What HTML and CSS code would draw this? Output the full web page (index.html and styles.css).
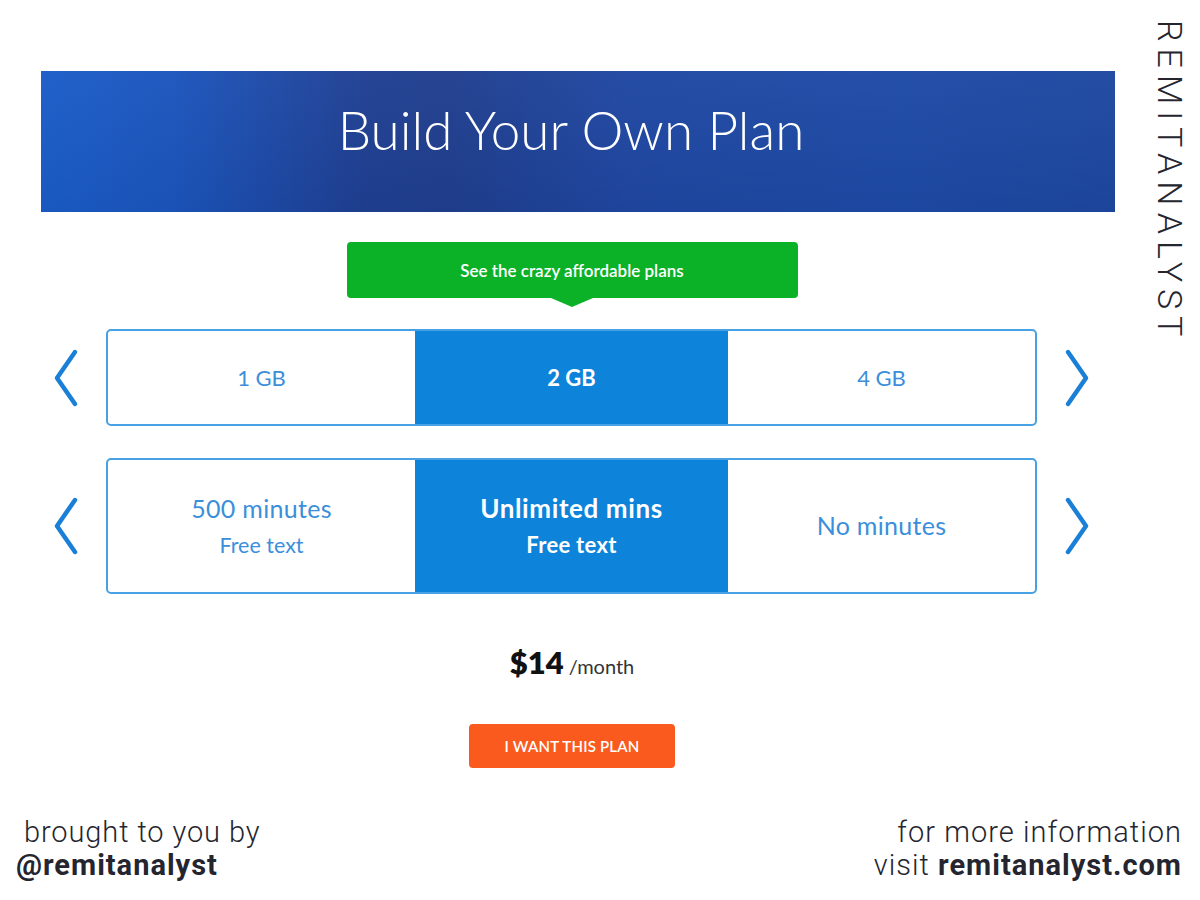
FILE: index.html
```html
<!DOCTYPE html>
<html lang="en">
<head>
<meta charset="utf-8">
<title>Build Your Own Plan</title>
<link rel="stylesheet" href="styles.css">
</head>
<body>
<div class="page">
  <div class="main">
    <header class="banner"><h1 class="banner-title">Build Your Own Plan</h1></header>
    <div class="stage">
      <div class="tip">See the crazy affordable plans</div>

      <div class="selector">
        <div class="nav nav-left">
          <svg width="26" height="60" viewBox="0 0 26 60"><path d="M22 4 L4 30 L22 56" fill="none" stroke="#1a80d7" stroke-width="4.5" stroke-linecap="round" stroke-linejoin="round"/></svg>
        </div>
        <div class="box box-data">
          <div class="cell">1 GB</div>
          <div class="cell cell-active">2 GB</div>
          <div class="cell">4 GB</div>
        </div>
        <div class="nav nav-right">
          <svg width="26" height="60" viewBox="0 0 26 60"><path d="M4 4 L22 30 L4 56" fill="none" stroke="#1a80d7" stroke-width="4.5" stroke-linecap="round" stroke-linejoin="round"/></svg>
        </div>
      </div>

      <div class="selector selector-mins">
        <div class="nav nav-left">
          <svg width="26" height="60" viewBox="0 0 26 60"><path d="M22 4 L4 30 L22 56" fill="none" stroke="#1a80d7" stroke-width="4.5" stroke-linecap="round" stroke-linejoin="round"/></svg>
        </div>
        <div class="box box-mins">
          <div class="cell cell-stack"><span class="big">500 minutes</span><span class="small">Free text</span></div>
          <div class="cell cell-active cell-stack"><span class="big">Unlimited mins</span><span class="small">Free text</span></div>
          <div class="cell"><span class="big">No minutes</span></div>
        </div>
        <div class="nav nav-right">
          <svg width="26" height="60" viewBox="0 0 26 60"><path d="M4 4 L22 30 L4 56" fill="none" stroke="#1a80d7" stroke-width="4.5" stroke-linecap="round" stroke-linejoin="round"/></svg>
        </div>
      </div>

      <div class="price"><span class="amount">$14</span><span class="per">/month</span></div>
      <a class="cta">I WANT THIS PLAN</a>
    </div>
  </div>

  <footer class="footer">
    <div class="credit">
      <div class="light indent">brought to you by</div>
      <div class="bold handle">@remitanalyst</div>
    </div>
    <div class="info">
      <div class="light">for more information</div>
      <div class="light">visit <span class="bold">remitanalyst.com</span></div>
    </div>
  </footer>

  <div class="brand">REMITANALYST</div>
</div>
</body>
</html>
```

FILE: styles.css
```css
* { box-sizing: border-box; }
html, body { margin: 0; padding: 0; background: #ffffff; }

.page {
  position: relative;
  width: 1200px;
  height: 900px;
  display: flex;
  flex-direction: column;
  font-family: Lato, "Liberation Sans", sans-serif;
  overflow: hidden;
}

.main {
  padding-top: 71px;
  padding-left: 41px;
}

.banner {
  width: 1074px;
  height: 141px;
  display: flex;
  align-items: center;
  justify-content: center;
  padding-right: 14px;
  background:
    linear-gradient(180deg, rgba(255,255,255,0.03) 0%, rgba(0,0,0,0.04) 100%),
    linear-gradient(90deg, #1a5cc8 0%, #1b55bd 12%, #1f3f92 30%, #1f3e8e 38%, #1f47a2 55%, #1d4aa6 80%, #1d47a0 100%);
}

.banner-title {
  margin: 0;
  color: #ffffff;
  font-family: Lato, "Open Sans", sans-serif;
  font-weight: 300;
  font-size: 53px;
  letter-spacing: 0px;
  line-height: 1;
  padding-bottom: 24px;
}

.stage {
  width: 1062px;
  display: flex;
  flex-direction: column;
  align-items: center;
}

.tip {
  position: relative;
  margin-top: 30px;
  width: 451px;
  height: 56px;
  background: #0bb227;
  border-radius: 4px;
  color: #ffffff;
  font-size: 17px;
  font-weight: 600;
  display: flex;
  align-items: center;
  justify-content: center;
}
.tip::after {
  content: "";
  position: absolute;
  left: 50%;
  bottom: -9px;
  margin-left: -21px;
  border-left: 21px solid transparent;
  border-right: 21px solid transparent;
  border-top: 9px solid #0bb227;
}

.selector {
  margin-top: 31px;
  width: 100%;
  display: flex;
  align-items: center;
}
.selector-mins { margin-top: 32px; }

.nav {
  width: 65px;
  display: flex;
  align-items: center;
}
.nav-left { padding-left: 12px; }
.nav-right { padding-left: 27px; }

.box {
  width: 931px;
  border: 2px solid #48a1e2;
  border-radius: 5px;
  display: grid;
  grid-template-columns: 307px 313px 1fr;
  overflow: hidden;
}
.box-data { height: 97px; }
.box-mins { height: 136px; }

.cell {
  display: flex;
  align-items: center;
  justify-content: center;
  color: #3b8fda;
  font-size: 22px;
}
.box-mins .cell { padding-bottom: 2px; }
.cell-active {
  background: #0d84d9;
  color: #ffffff;
  font-weight: 700;
}
.cell-stack {
  flex-direction: column;
  gap: 9px;
}
.big { font-size: 25px; line-height: 30px; letter-spacing: 0.3px; }
.small { font-size: 21.5px; line-height: 26px; }
.cell-active .big { font-size: 26px; letter-spacing: 0.6px; }
.cell-active .small { font-size: 22px; letter-spacing: 0.3px; }

.price {
  margin-top: 49px;
  display: flex;
  align-items: baseline;
  gap: 5px;
  color: #111111;
}
.amount {
  font-size: 31px;
  font-weight: 800;
}
.per {
  font-size: 20px;
  color: #333333;
}

.cta {
  margin-top: 43px;
  width: 206px;
  height: 44px;
  border-radius: 4px;
  background: #fb5a1e;
  color: #ffffff;
  font-size: 15px;
  font-weight: 600;
  display: flex;
  align-items: center;
  justify-content: center;
  letter-spacing: 0.2px;
}

.footer {
  margin-top: auto;
  display: flex;
  justify-content: space-between;
  align-items: flex-end;
  padding: 0 19px 18px 16px;
  font-family: Roboto, "Liberation Sans", sans-serif;
  color: #25252f;
  font-size: 29px;
  line-height: 33px;
}
.light { font-weight: 300; letter-spacing: 0.9px; }
.bold { font-weight: 700; letter-spacing: 1px; }
.handle { letter-spacing: 1px; }
.indent { padding-left: 8px; }
.info { text-align: right; }
.info .light { margin-right: -1px; letter-spacing: 1.05px; }

.brand {
  position: absolute;
  top: 20px;
  right: 13px;
  writing-mode: vertical-rl;
  font-family: Roboto, "Liberation Sans", sans-serif;
  font-weight: 300;
  font-size: 34px;
  letter-spacing: 7px;
  color: #25252f;
  line-height: 1;
}
```
